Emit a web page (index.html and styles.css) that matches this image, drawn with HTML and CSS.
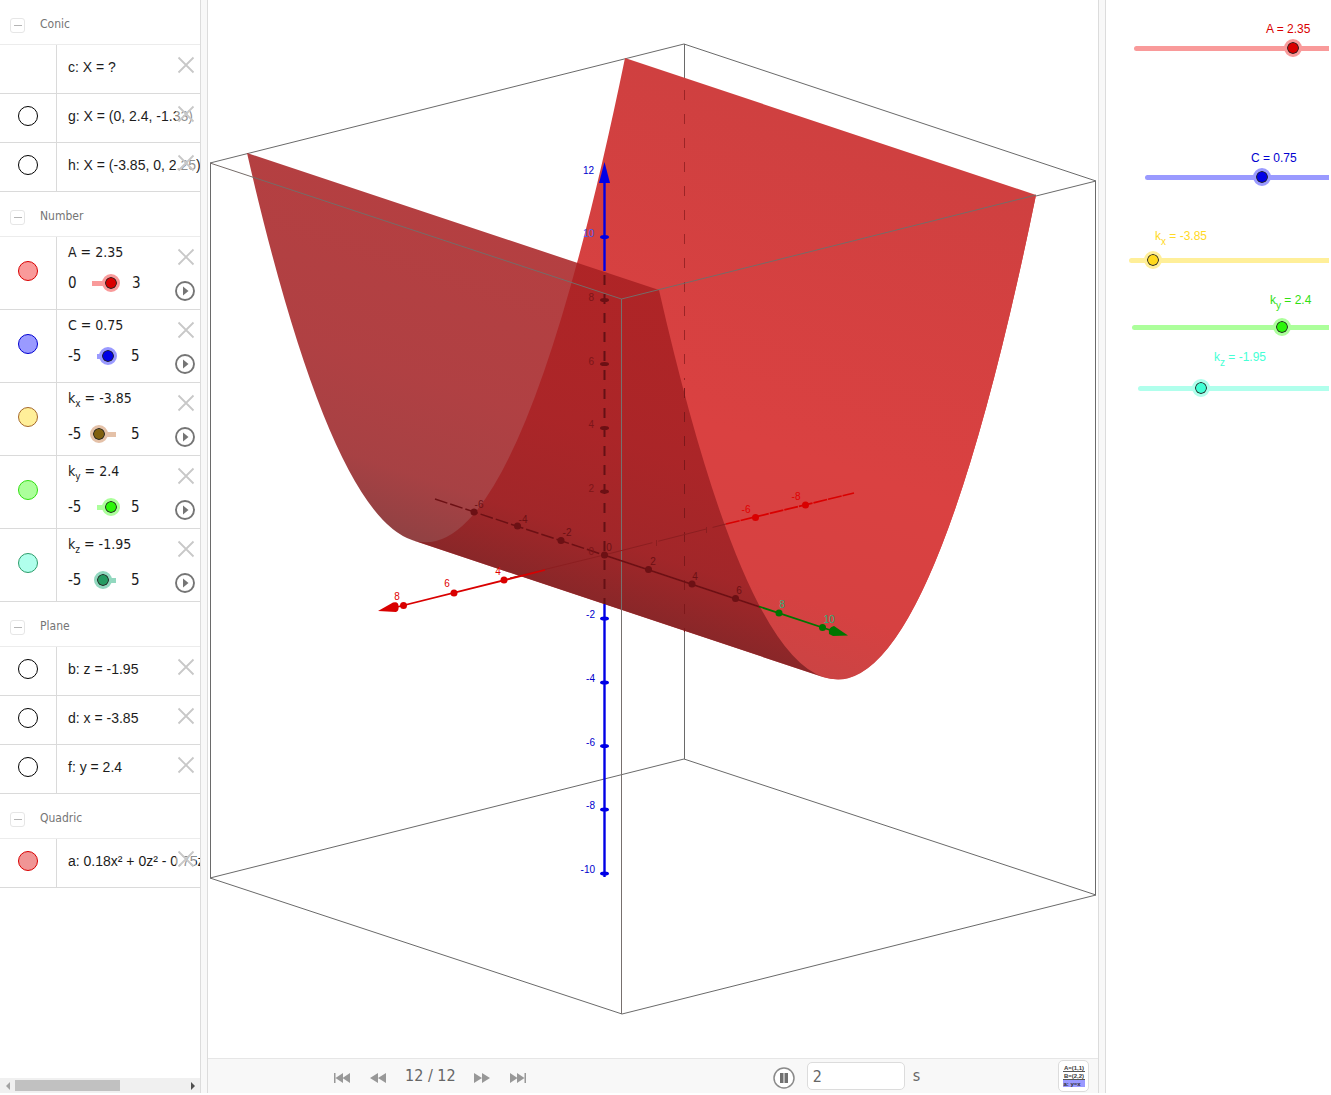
FILE: index.html
```html
<!DOCTYPE html>
<html lang="en">
<head>
<meta charset="utf-8">
<title>Quadric surface</title>
<link rel="stylesheet" href="styles.css">
</head>
<body>
<svg class="defs" aria-hidden="true">
  <symbol id="i-close" viewBox="0 0 20 20"><path d="M2.500 2.500L17.500 17.500M17.500 2.500L2.500 17.500" fill="none" stroke="#c8c8c8" stroke-width="1.800"/></symbol>
  <symbol id="i-play" viewBox="0 0 20 20"><circle cx="10" cy="10" r="9" fill="#fff" stroke="#757575" stroke-width="1.900"/><path d="M8 5.500L13.500 10L8 14.500z" fill="#757575"/></symbol>
</svg>
<main class="app">
  <aside class="algebra">
    <div class="list">
      <h2 class="group"><button class="fold" aria-label="Collapse Conic"></button>Conic</h2>
      <div class="row"><div class="mark"></div><div class="body"><p class="formula">c: X = ?</p></div><button class="close" aria-label="Delete c"><svg><use href="#i-close"/></svg></button></div>
      <div class="row"><div class="mark"><button class="dot" aria-label="Show g"></button></div><div class="body"><p class="formula">g: X = (0, 2.4, -1.33)</p></div><button class="close" aria-label="Delete g"><svg><use href="#i-close"/></svg></button></div>
      <div class="row"><div class="mark"><button class="dot" aria-label="Show h"></button></div><div class="body"><p class="formula">h: X = (-3.85, 0, 2.25)</p></div><button class="close" aria-label="Delete h"><svg><use href="#i-close"/></svg></button></div>

      <h2 class="group"><button class="fold" aria-label="Collapse Number"></button>Number</h2>
      <div class="row num red"><div class="mark"><button class="dot" aria-label="Hide A"></button></div><div class="body"><label class="name" for="la">A = 2.35</label><div class="range"><span class="min">0</span><input class="slider wide" id="la" type="range" min="0" max="3" step="0.05" value="2.35"><span class="max">3</span></div></div><button class="close" aria-label="Delete A"><svg><use href="#i-close"/></svg></button><button class="play" aria-label="Play A"><svg><use href="#i-play"/></svg></button></div>
      <div class="row num blue"><div class="mark"><button class="dot" aria-label="Hide C"></button></div><div class="body"><label class="name" for="lc">C = 0.75</label><div class="range"><span class="min">-5</span><input class="slider" id="lc" type="range" min="-5" max="5" step="0.05" value="0.75"><span class="max">5</span></div></div><button class="close" aria-label="Delete C"><svg><use href="#i-close"/></svg></button><button class="play" aria-label="Play C"><svg><use href="#i-play"/></svg></button></div>
      <div class="row num brown sub"><div class="mark"><button class="dot" aria-label="Hide kx"></button></div><div class="body"><label class="name" for="lx">k<sub>x</sub> = -3.85</label><div class="range"><span class="min">-5</span><input class="slider" id="lx" type="range" min="-5" max="5" step="0.05" value="-3.85"><span class="max">5</span></div></div><button class="close" aria-label="Delete kx"><svg><use href="#i-close"/></svg></button><button class="play" aria-label="Play kx"><svg><use href="#i-play"/></svg></button></div>
      <div class="row num green sub"><div class="mark"><button class="dot" aria-label="Hide ky"></button></div><div class="body"><label class="name" for="ly">k<sub>y</sub> = 2.4</label><div class="range"><span class="min">-5</span><input class="slider" id="ly" type="range" min="-5" max="5" step="0.05" value="2.4"><span class="max">5</span></div></div><button class="close" aria-label="Delete ky"><svg><use href="#i-close"/></svg></button><button class="play" aria-label="Play ky"><svg><use href="#i-play"/></svg></button></div>
      <div class="row num teal sub"><div class="mark"><button class="dot" aria-label="Hide kz"></button></div><div class="body"><label class="name" for="lz">k<sub>z</sub> = -1.95</label><div class="range"><span class="min">-5</span><input class="slider" id="lz" type="range" min="-5" max="5" step="0.05" value="-1.95"><span class="max">5</span></div></div><button class="close" aria-label="Delete kz"><svg><use href="#i-close"/></svg></button><button class="play" aria-label="Play kz"><svg><use href="#i-play"/></svg></button></div>

      <h2 class="group"><button class="fold" aria-label="Collapse Plane"></button>Plane</h2>
      <div class="row"><div class="mark"><button class="dot" aria-label="Show b"></button></div><div class="body"><p class="formula">b: z = -1.95</p></div><button class="close" aria-label="Delete b"><svg><use href="#i-close"/></svg></button></div>
      <div class="row"><div class="mark"><button class="dot" aria-label="Show d"></button></div><div class="body"><p class="formula">d: x = -3.85</p></div><button class="close" aria-label="Delete d"><svg><use href="#i-close"/></svg></button></div>
      <div class="row"><div class="mark"><button class="dot" aria-label="Show f"></button></div><div class="body"><p class="formula">f: y = 2.4</p></div><button class="close" aria-label="Delete f"><svg><use href="#i-close"/></svg></button></div>

      <h2 class="group"><button class="fold" aria-label="Collapse Quadric"></button>Quadric</h2>
      <div class="row quadric"><div class="mark"><button class="dot" aria-label="Hide a"></button></div><div class="body"><p class="formula">a: 0.18x² + 0z² - 0.75z</p></div><button class="close" aria-label="Delete a"><svg><use href="#i-close"/></svg></button></div>
    </div>
    <div class="hscroll">
      <button class="arrow" aria-label="Scroll left"><svg viewBox="0 0 6 8"><path d="M5 0V8L1 4z" fill="#a3a3a3"/></svg></button>
      <div class="track"><div class="thumb"></div></div>
      <button class="arrow" aria-label="Scroll right"><svg viewBox="0 0 6 8"><path d="M1 0V8L5 4z" fill="#505050"/></svg></button>
    </div>
  </aside>
  <div class="splitter"></div>

  <section class="space">
    <svg class="scene" viewBox="208 0 890 1058" role="img" aria-label="Parabolic cylinder in a coordinate box">
      <defs>
        <linearGradient id="near" gradientUnits="userSpaceOnUse" x1="247" y1="153" x2="147" y2="452">
          <stop offset="0" stop-color="#a82022"/><stop offset=".5" stop-color="#a32124"/><stop offset=".8" stop-color="#992225"/><stop offset="1" stop-color="#7e2224"/>
        </linearGradient>
        <linearGradient id="far" gradientUnits="userSpaceOnUse" x1="625" y1="58" x2="455" y2="567">
          <stop offset="0" stop-color="#cf4040"/><stop offset=".6" stop-color="#da4141"/><stop offset=".85" stop-color="#d64141"/><stop offset="1" stop-color="#c94444"/>
        </linearGradient>
      </defs>
      <g fill="none" stroke="#6a6a6a" stroke-width="1">
        <path d="M684.500 44V84M684.500 632V759M210.500 163V878M1095.500 181V895"/>
        <path d="M210 163L684 44L1096 181L1036 196M210 878L684 759L1096 895L622 1014z"/>
      </g>
      <path fill="url(#far)" d="M625 58L1036 195Q941.750 654.500 847.500 678.500Q836 681 823 677L412 540Q424 544 436 541Q530.500 517 625 58z"/>
      <path fill="url(#far)" d="M1036 195Q847.500 1113.500 659 290z"/>
      <path d="M684.500 90V380" fill="none" stroke="#9c2426" stroke-width="1" stroke-dasharray="10 14"/>
      <path fill="url(#near)" fill-opacity=".86" d="M247 153L659 290Q741 649.500 823 677L412 540Q329.500 512.500 247 153z"/>
      <path d="M684.500 388V632" fill="none" stroke="#7d181b" stroke-width="1" stroke-dasharray="10 14"/>
      <path d="M210 163L621.500 299L1036 195" fill="none" stroke="#756c69"/>
      <path d="M621.500 299V1014" fill="none" stroke="#77706e"/>

      <g fill="none">
        <path d="M604 555L510 578" stroke="#8c1e20"/><path d="M604 555L726 524" stroke="#8c1e20" stroke-dasharray="50 6"/>
        <path d="M726 524L854 493" stroke="#d90000" stroke-width="1.700" stroke-dasharray="14 1"/>
        <path d="M545 570L395 607.500" stroke="#d90000" stroke-width="1.800"/>
        <path d="M435 499L604 555" stroke="#6c1014" stroke-width="1.500" stroke-dasharray="13 3"/>
        <path d="M604 555L760 607" stroke="#6c1014" stroke-width="1.500"/>
        <path d="M759 606.500L833 631" stroke="#007500" stroke-width="1.800"/>
        <path d="M604.500 604V877" stroke="#0000e6" stroke-width="2.400"/>
        <path d="M604.500 182V271" stroke="#0000e6" stroke-width="2.400"/>
        <path d="M604.500 275V604" stroke="#651015" stroke-width="2" stroke-dasharray="10 9"/>
      </g>
      <path d="M604.500 162L610 183H599z" fill="#0000e6"/>
      <path d="M378 611L393 602.500Q399 601 398.500 607Q399 611 396 612z" fill="#d90000"/>
      <path d="M848 635.500L834 626Q828 627 829 634L833 636z" fill="#007500"/>
      <g fill="#0000e6"><ellipse cx="604.500" cy="237" rx="4.500" ry="2"/><ellipse cx="604.500" cy="618.500" rx="4.500" ry="2"/><ellipse cx="604.500" cy="682.500" rx="4.500" ry="2"/><ellipse cx="604.500" cy="746" rx="4.500" ry="2"/><ellipse cx="604.500" cy="809.500" rx="4.500" ry="2"/><ellipse cx="604.500" cy="873.500" rx="4.500" ry="2"/></g>
      <g fill="#6c1014"><ellipse cx="604.500" cy="300" rx="4.500" ry="2"/><ellipse cx="604.500" cy="364" rx="4.500" ry="2"/><ellipse cx="604.500" cy="428" rx="4.500" ry="2"/><ellipse cx="604.500" cy="491.500" rx="4.500" ry="2"/><circle cx="604.500" cy="555" r="3.500"/>
        <circle cx="474" cy="512" r="3.500"/><circle cx="517.500" cy="526" r="3.500"/><circle cx="561" cy="540.500" r="3.500"/><circle cx="648.500" cy="569.500" r="3.500"/><circle cx="692" cy="584" r="3.500"/><circle cx="735.500" cy="598.500" r="3.500"/></g>
      <g fill="#007500"><circle cx="779" cy="613" r="3.500"/><circle cx="822.500" cy="627.500" r="3.500"/></g>
      <g fill="#d90000"><circle cx="403.500" cy="605.500" r="3.500"/><circle cx="454" cy="593" r="3.500"/><circle cx="504" cy="580" r="3.500"/><circle cx="755.500" cy="517.500" r="3.500"/><circle cx="805.500" cy="505" r="3.500"/></g>
      <path d="M656.500 540V546M706.500 527V533" stroke="#8c1e20"/>
      <g class="tick" fill="#0000cc" text-anchor="end"><text x="594" y="174">12</text><text x="594" y="237" fill="#4d5cf0">10</text><text x="595" y="618">-2</text><text x="595" y="682">-4</text><text x="595" y="746">-6</text><text x="595" y="809">-8</text><text x="595" y="873">-10</text></g>
      <g class="tick" fill="#7d1518" text-anchor="end"><text x="594" y="301">8</text><text x="594" y="365">6</text><text x="594" y="428">4</text><text x="594" y="492">2</text><text x="594" y="555">0</text></g>
      <g class="tick" fill="#6c1014" text-anchor="middle"><text x="479" y="508">-6</text><text x="523" y="523">-4</text><text x="567" y="536">-2</text><text x="609" y="551">0</text><text x="653" y="565">2</text><text x="695" y="580">4</text><text x="739" y="594">6</text></g>
      <g class="tick" fill="#2fae7b" text-anchor="middle"><text x="782" y="608">8</text><text x="829" y="623">10</text></g>
      <g class="tick" fill="#e00000" text-anchor="middle"><text x="397" y="600">8</text><text x="447" y="587">6</text><text x="498" y="575">4</text><text x="746" y="513">-6</text><text x="796" y="500">-8</text></g>
    </svg>
    <footer class="playbar">
      <button class="nav" aria-label="First step"><svg viewBox="0 0 18 12"><path d="M1 1h1.500v10H1zM10 1v10L2.500 6zM17 1v10L9.500 6z"/></svg></button>
      <button class="nav" aria-label="Previous step"><svg viewBox="0 0 18 12"><path d="M9 1v10L1 6zM17 1v10L9 6z"/></svg></button>
      <output class="step">12 / 12</output>
      <button class="nav" aria-label="Next step"><svg viewBox="0 0 18 12"><path d="M1 1v10L9 6zM9 1v10L17 6z"/></svg></button>
      <button class="nav" aria-label="Last step"><svg viewBox="0 0 18 12"><path d="M15.500 1H17v10h-1.500zM1 1v10L8.500 6zM8 1v10L15.500 6z"/></svg></button>
      <button class="pause" aria-label="Pause"><svg viewBox="0 0 24 24"><circle cx="12" cy="12" r="10" fill="#fff" stroke="#8a8a8a" stroke-width="1.500"/><path d="M8 7h3.500v10H8zM12.500 7H16v10h-3.500z" fill="#707070"/></svg></button>
      <label class="speed"><input type="text" value="2"><span>s</span></label>
      <button class="protocol" aria-label="Construction protocol"><svg viewBox="0 0 24 24"><path d="M1 16h22v7H1z" fill="#9a99ff"/><path d="M1 7.500h22M1 15.500h22" stroke="#555" fill="none"/><text x="12" y="6" text-anchor="middle">A=(1,1)</text><text x="12" y="14" text-anchor="middle">B=(2,2)</text><text x="10" y="22" text-anchor="middle">a: y=x</text></svg></button>
    </footer>
  </section>
  <div class="splitter"></div>

  <section class="graphics">
    <div class="pin pin-a red"><label for="ga">A = 2.35</label><input class="slider" id="ga" type="range" min="0" max="3" step="0.05" value="2.35"></div>
    <div class="pin pin-c blue"><label for="gc">C = 0.75</label><input class="slider" id="gc" type="range" min="-5" max="5" step="0.05" value="0.75"></div>
    <div class="pin pin-x yellow"><label for="gx">k<sub>x</sub> = -3.85</label><input class="slider" id="gx" type="range" min="-5" max="5" step="0.05" value="-3.85"></div>
    <div class="pin pin-y green"><label for="gy">k<sub>y</sub> = 2.4</label><input class="slider" id="gy" type="range" min="-5" max="5" step="0.05" value="2.4"></div>
    <div class="pin pin-z aqua"><label for="gz">k<sub>z</sub> = -1.95</label><input class="slider" id="gz" type="range" min="-5" max="5" step="0.05" value="-1.95"></div>
  </section>
</main>
</body>
</html>
```
FILE: styles.css
```css
* { box-sizing: border-box; }
body { margin: 0; background: #fff; color: #1c1c1c; font: 14px/18px "DejaVu Sans Condensed", "DejaVu Sans", sans-serif; }
button { padding: 0; border: 0; background: none; font: inherit; display: block; }
h2, p { margin: 0; }
.defs { position: absolute; width: 0; height: 0; }
.app { display: flex; height: 100vh; padding: 0 2px 2px 0; overflow: hidden; }
.splitter { flex: 0 0 8px; background: #f8f8f8; border: solid #dcdcdc; border-width: 0 1px; }

/* one colour set per number: line, knob and halo */
.red { --line: #d90000; --knob: #d90000; --halo: #f99a9a; --mark: #f99a9a; }
.blue { --line: #0000d0; --knob: #0000e6; --halo: #9a9aff; --mark: #9a9aff; }
.brown { --line: #a5682a; --knob: #80600f; --halo: #e4c1a8; --mark: #ffef99; }
.green { --line: #30e010; --knob: #2bf50a; --halo: #acff9b; --mark: #acff9b; }
.teal { --line: #2c9c6a; --knob: #259b62; --halo: #92d8bf; --mark: #b0ffec; }
.yellow { --line: #ffd926; --knob: #ffd91c; --halo: #ffef99; }
.aqua { --line: #45ffd5; --knob: #40ffd4; --halo: #b0ffec; }
.quadric { --line: #d90000; --mark: #f09595; }

.algebra { flex: 0 0 200px; display: flex; flex-direction: column; overflow: hidden; }
.list { flex: 1; overflow: hidden; }
.group { display: flex; align-items: center; gap: 15px; height: 45px; padding: 4px 0 0 10px; border-bottom: 1px solid #ececec; color: #757575; font-size: 12px; font-weight: normal; }
.fold { width: 15px; height: 15px; margin-top: 2px; border: 1px solid #e6e6e6; border-radius: 3px; }
.fold::before { content: ""; display: block; width: 8px; height: 1px; margin: auto; background: #b4b4b4; }
.row { position: relative; display: flex; height: 49px; border-bottom: 1px solid #dadada; }
.num { height: 73px; }
.mark { flex: 0 0 57px; display: grid; place-items: center; padding-bottom: 4px; border-right: 1px solid #dadada; }
.dot { width: 20px; height: 20px; border: 1px solid var(--line, #000); border-radius: 50%; background: var(--mark, #fff); }
.body { padding: 13px 0 0 11px; white-space: nowrap; }
.formula { font-family: "Liberation Sans", Arial, sans-serif; }
.num .body { padding-top: 6px; }
.name { display: block; height: 18px; }
sub { font-size: 10px; line-height: 0; vertical-align: -4px; }
.range { display: flex; align-items: center; margin-top: 13px; font-size: 15px; }
.sub .range { margin-top: 18px; }
.min { width: 20px; }
.max { margin-left: 6px; }
.range .slider { width: 37px; }
.range .wide { width: 42px; margin-left: -5px; }
.range .wide + .max { margin-left: 7px; }
.close, .play { position: absolute; left: 176px; width: 20px; height: 20px; }
.close { top: 10px; background: rgba(255, 255, 255, .5); }
.play { left: 175px; top: 44px; }
.close svg, .play svg { display: block; width: 20px; height: 20px; }

.slider { appearance: none; -webkit-appearance: none; display: block; height: 18px; margin: 0; background: linear-gradient(var(--halo), var(--halo)) center / calc(100% - 18px) 5px no-repeat; }
.slider::-webkit-slider-thumb { -webkit-appearance: none; width: 18px; height: 18px; border: 3px solid var(--halo); border-radius: 50%; background: var(--knob) padding-box; box-shadow: inset 0 0 0 1px #222; }

.hscroll { flex: 0 0 15px; display: flex; align-items: center; background: #f0f0f0; }
.arrow { width: 15px; height: 15px; }
.arrow svg { display: block; width: 6px; height: 8px; margin: 4px auto; }
.track { flex: 1; }
.thumb { width: 62%; height: 11px; background: #c1c1c1; }

.space { flex: 1; min-width: 0; display: flex; flex-direction: column; }
.scene { flex: 1; min-height: 0; width: 100%; display: block; }
.tick { font: 10px "Liberation Sans", Arial, sans-serif; }
.playbar { flex: 0 0 35px; display: flex; align-items: center; padding: 0 9px 0 125px; background: #f8f8f8; border-top: 1px solid #e6e6e6; color: #666; font-size: 16px; }
.nav { width: 18px; height: 12px; margin-top: 3px; }
.nav svg { display: block; width: 18px; height: 12px; fill: #989898; }
.nav + .nav { margin-left: 18px; }
.step { margin: 0 17px 0 18px; }
.pause { width: 24px; height: 24px; margin: 3px 0 0 245px; }
.pause svg { display: block; width: 24px; height: 24px; }
.speed { display: flex; align-items: center; gap: 8px; margin-left: 11px; }
.speed input { width: 98px; height: 28px; padding: 0 5px; border: 1px solid #dcdcdc; border-radius: 5px; background: #fff; color: #666; font: inherit; }
.protocol { width: 31px; height: 32px; margin-left: auto; border: 1px solid #dcdcdc; border-radius: 5px; background: #fff; }
.protocol svg { display: block; width: 24px; height: 24px; margin: auto; }
.protocol text { font: bold 6px "Liberation Sans", Arial, sans-serif; fill: #333; }

/* free canvas: each slider sits where the user dropped it */
.graphics { flex: 0 0 223px; position: relative; overflow: hidden; font: 12px/14px "Liberation Sans", Arial, sans-serif; }
.pin { position: absolute; width: 220px; color: var(--line); }
.pin label { position: absolute; bottom: 21px; white-space: nowrap; }
.pin .slider { width: 220px; background: none; position: relative; }
.pin::before { content: ""; position: absolute; left: 8px; right: 8px; top: 7px; height: 5px; border-radius: 3px; background: var(--halo); }
.pin sub { font-size: 10px; vertical-align: -5px; }
.pin-a { left: 20px; top: 39px; } .pin-a label { left: 140px; }
.pin-c { left: 31px; top: 168px; } .pin-c label { left: 114px; }
.pin-x { left: 15px; top: 251px; } .pin-x label { left: 34px; bottom: 26px; }
.pin-y { left: 18px; top: 318px; } .pin-y label { left: 146px; bottom: 29px; }
.pin-z { left: 24px; top: 379px; } .pin-z label { left: 84px; bottom: 33px; }
```
